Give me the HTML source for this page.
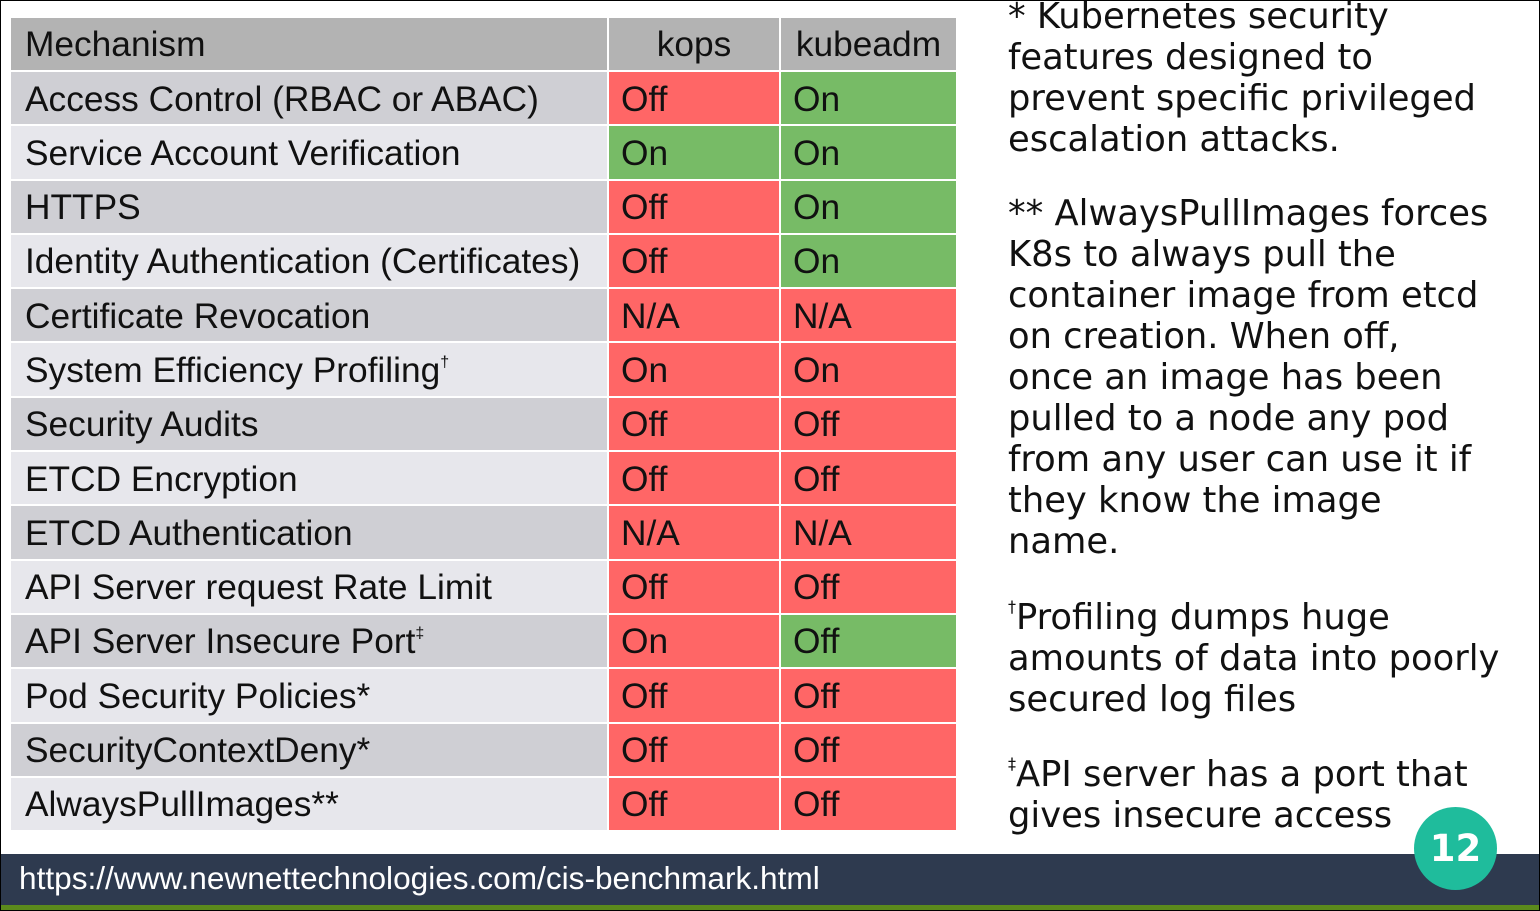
<!DOCTYPE html>
<html><head><style>
body{margin:0;width:1540px;height:911px;overflow:hidden;background:#fff;position:relative;font-family:"Liberation Sans",sans-serif}
.frame{position:absolute;left:0;top:0;width:1538px;height:909px;border:1px solid #000}
table{position:absolute;left:11px;top:18px;border-collapse:collapse;table-layout:fixed;width:946px}
td{height:50.3px;padding:2px 0 0 14px;font-size:35.3px;color:#111;border:2px solid #fff;white-space:nowrap;line-height:1;overflow:hidden}
tr:first-child td{border-top:none}
td:first-child{border-left:none}
td.k{padding-left:12px}
td.a{padding-left:12px}
.h td{background:#b3b3b3;height:50px}
.h td.k,.h td.a{text-align:center;padding-left:0}
.d td:first-child{background:#cfcfd4}
.l td:first-child{background:#e7e7ec}
.r{background:#ff6666}
.g{background:#77bb66}
sup{font-size:16px;vertical-align:15px}
.side{position:absolute;left:1008px;font-family:"DejaVu Sans",sans-serif;font-size:35.3px;line-height:41px;color:#111;white-space:nowrap}
.side sup{font-size:16px;vertical-align:17px}
.bar{position:absolute;left:1px;top:854px;width:1538px;height:51px;background:#2e3a4f;color:#fff;font-size:31.6px;line-height:48px;padding-left:18px;box-sizing:border-box}
.green{position:absolute;left:1px;top:905px;width:1538px;height:5px;background:#5b8a1c}
.circ{position:absolute;left:1414px;top:807px;width:83px;height:83px;border-radius:50%;background:#1fbc9c;color:#fff;font-family:"DejaVu Sans",sans-serif;font-weight:bold;font-size:37px;text-align:center;line-height:83px}
</style></head><body>
<div class="frame"></div>
<table>
<colgroup><col style="width:597px"><col style="width:172px"><col style="width:177px"></colgroup>
<tr class="h"><td>Mechanism</td><td class="k">kops</td><td class="a">kubeadm</td></tr>
<tr class="d"><td>Access Control (RBAC or ABAC)</td><td class="k r">Off</td><td class="a g">On</td></tr>
<tr class="l"><td>Service Account Verification</td><td class="k g">On</td><td class="a g">On</td></tr>
<tr class="d"><td>HTTPS</td><td class="k r">Off</td><td class="a g">On</td></tr>
<tr class="l"><td>Identity Authentication (Certificates)</td><td class="k r">Off</td><td class="a g">On</td></tr>
<tr class="d"><td>Certificate Revocation</td><td class="k r">N/A</td><td class="a r">N/A</td></tr>
<tr class="l"><td>System Efficiency Profiling<sup>†</sup></td><td class="k r">On</td><td class="a r">On</td></tr>
<tr class="d"><td>Security Audits</td><td class="k r">Off</td><td class="a r">Off</td></tr>
<tr class="l"><td>ETCD Encryption</td><td class="k r">Off</td><td class="a r">Off</td></tr>
<tr class="d"><td>ETCD Authentication</td><td class="k r">N/A</td><td class="a r">N/A</td></tr>
<tr class="l"><td>API Server request Rate Limit</td><td class="k r">Off</td><td class="a r">Off</td></tr>
<tr class="d"><td>API Server Insecure Port<sup>‡</sup></td><td class="k r">On</td><td class="a g">Off</td></tr>
<tr class="l"><td>Pod Security Policies*</td><td class="k r">Off</td><td class="a r">Off</td></tr>
<tr class="d"><td>SecurityContextDeny*</td><td class="k r">Off</td><td class="a r">Off</td></tr>
<tr class="l"><td>AlwaysPullImages**</td><td class="k r">Off</td><td class="a r">Off</td></tr>
</table>
<div class="side" style="top:-4px">* Kubernetes security<br>features designed to<br>prevent specific privileged<br>escalation attacks.</div>
<div class="side" style="top:193px">** AlwaysPullImages forces<br>K8s to always pull the<br>container image from etcd<br>on creation. When off,<br>once an image has been<br>pulled to a node any pod<br>from any user can use it if<br>they know the image<br>name.</div>
<div class="side" style="top:586px"><sup>†</sup>Profiling dumps huge<br>amounts of data into poorly<br>secured log files</div>
<div class="side" style="top:743px"><sup>‡</sup>API server has a port that<br>gives insecure access</div>
<div class="bar">https://www.newnettechnologies.com/cis-benchmark.html</div>
<div class="green"></div>
<div class="circ">12</div>
</body></html>
